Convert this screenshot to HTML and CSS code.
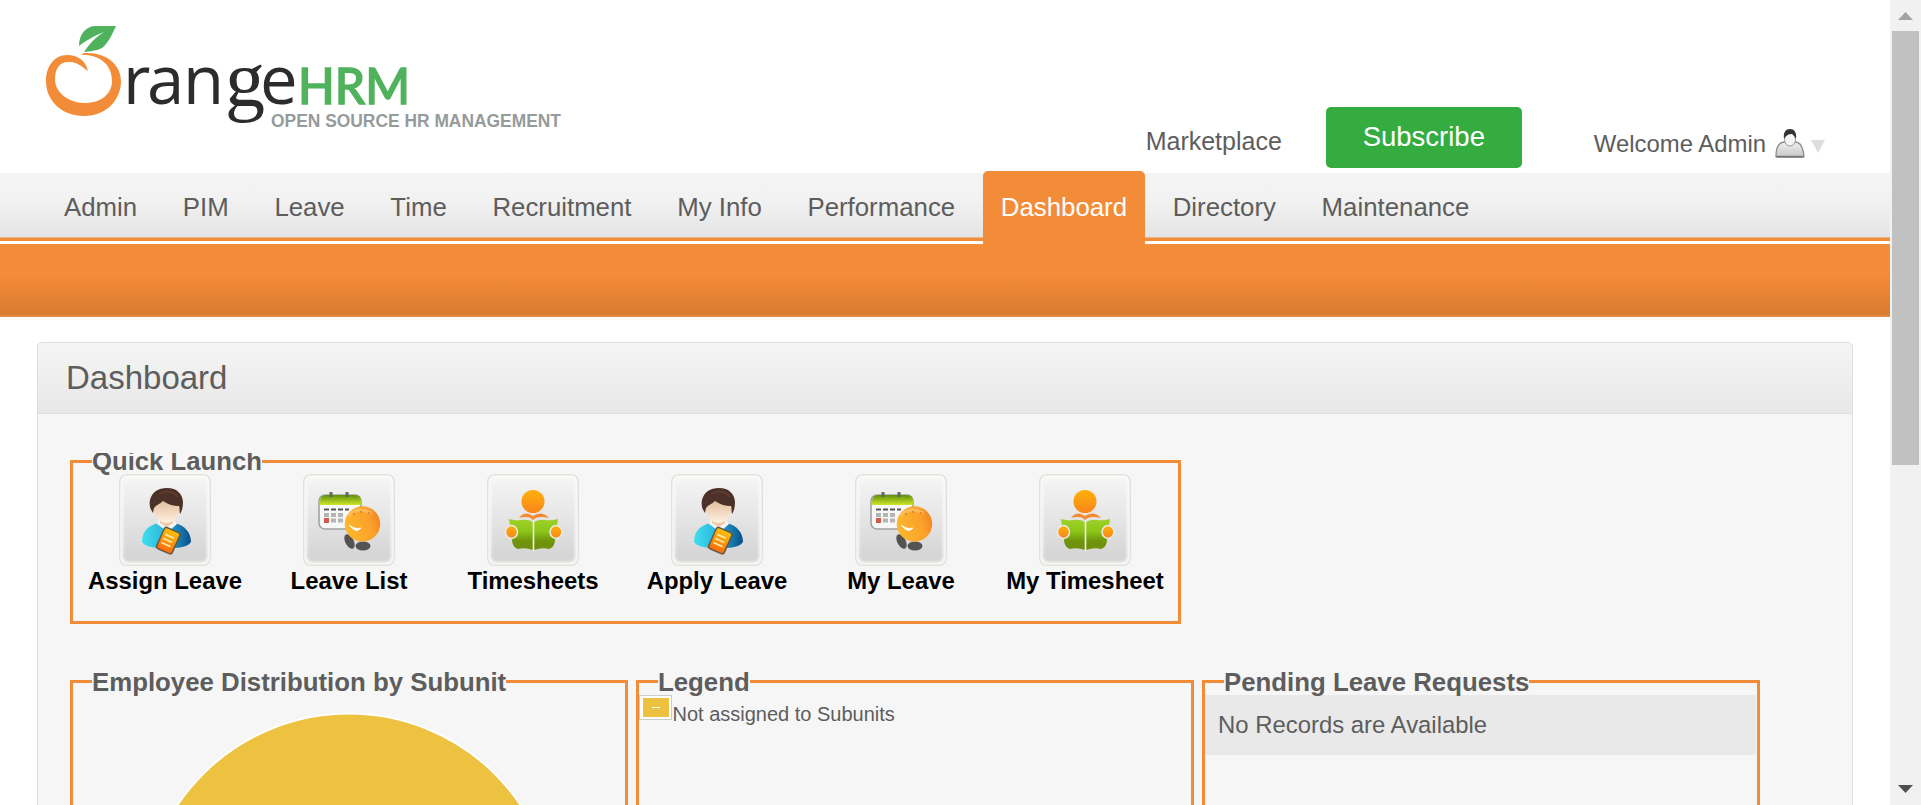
FILE: index.html
```html
<!DOCTYPE html>
<html lang="en">
<head>
<meta charset="utf-8">
<title>OrangeHRM</title>
<link rel="stylesheet" href="styles.css">
</head>
<body>
<svg class="defs" width="0" height="0" aria-hidden="true">
  <defs>
    <linearGradient id="tile" x1="0" y1="0" x2="0" y2="1"><stop offset="0" stop-color="#f5f5f5"/><stop offset="1" stop-color="#d3d3d3"/></linearGradient>
    <linearGradient id="shirt" x1="0" y1="0" x2="1" y2="0"><stop offset="0" stop-color="#3fe0ee"/><stop offset=".45" stop-color="#2cb4dc"/><stop offset="1" stop-color="#0a4f8a"/></linearGradient>
    <linearGradient id="card" x1="0" y1="0" x2="0" y2="1"><stop offset="0" stop-color="#fdc20a"/><stop offset="1" stop-color="#f76a0c"/></linearGradient>
    <linearGradient id="skin" x1="0" y1="0" x2="0" y2="1"><stop offset="0" stop-color="#d9ac84"/><stop offset="1" stop-color="#fff1e2"/></linearGradient>
    <linearGradient id="calgreen" x1="0" y1="0" x2="0" y2="1"><stop offset="0" stop-color="#5d9209"/><stop offset="1" stop-color="#d0e62a"/></linearGradient>
    <linearGradient id="book" x1="0" y1="0" x2="0" y2="1"><stop offset="0" stop-color="#9fd12a"/><stop offset=".4" stop-color="#8cc618"/><stop offset=".7" stop-color="#6f950c"/><stop offset="1" stop-color="#6f900d"/></linearGradient>
    <linearGradient id="head" x1="0" y1="0" x2="0" y2="1"><stop offset="0" stop-color="#ffb00a"/><stop offset="1" stop-color="#f9861c"/></linearGradient>
    <linearGradient id="ball" x1="0" y1=".3" x2="1" y2="0"><stop offset="0" stop-color="#fdb52b"/><stop offset=".6" stop-color="#fba12c"/><stop offset="1" stop-color="#f07c1c"/></linearGradient>
    <linearGradient id="user" x1="0" y1="0" x2="0" y2="1"><stop offset="0" stop-color="#efefef"/><stop offset="1" stop-color="#c9c9c9"/></linearGradient>
    <filter id="soft" x="-10%" y="-10%" width="120%" height="120%"><feGaussianBlur stdDeviation="1.6"/></filter>
    <g id="frame">
      <rect x=".7" y=".7" width="90.6" height="90.6" rx="7" fill="#f9f9f5" stroke="#dfdfdc" stroke-width="1.3"/>
      <rect x="4" y="4" width="84" height="84" rx="5" fill="url(#tile)" filter="url(#soft)"/>
    </g>
    <symbol id="i-person" viewBox="0 0 92 92">
      <use href="#frame"/>
      <path d="M23 68c0-10 6-17 17-19h15c11 2 17 10 17 19-4 6-14 6-24 6s-21 0-25-6z" fill="url(#shirt)"/>
      <path d="M38 50l2-5h14l4 5-9 8z" fill="#f4f5f6"/>
      <path d="M41 42h13v7l-6 4-7-4z" fill="#efc9a4"/>
      <path d="M34 30c0-7 6-11 13-11s14 5 14 11c0 11-6 19-13.500 19S34 41 34 30z" fill="url(#skin)"/>
      <path d="M34 39c-3-4-4-9-3-13 2-8 8-12 17-12 10 0 16 6 16 15 0 4-1 8-3 11-1-3 0-7-1-8-6 0-12-2-16-5-3 3-7 4-9 7z" fill="#4c3128"/>
      <path d="M40 20c6-4 14-3 19 3" fill="none" stroke="#63402f" stroke-width="1.500"/>
      <g transform="rotate(24 49 66)">
        <rect x="41" y="55" width="17" height="23" rx="2.500" fill="url(#card)" stroke="#665a48" stroke-width="1.500"/>
        <path d="M44 62h10M44 66.500h10M44 71h10" stroke="#ffe3a0" stroke-width="1.800"/>
      </g>
    </symbol>
    <symbol id="i-calendar" viewBox="0 0 92 92">
      <use href="#frame"/>
      <rect x="16" y="21" width="42" height="34" rx="6" fill="#f7f7f7" stroke="#a3a3a3" stroke-width="1.600"/>
      <path d="M17 31v-4q0-6 6-6h29q6 0 6 6v4z" fill="url(#calgreen)"/>
      <path d="M28 18v5M44 18v5" stroke="#666" stroke-width="3"/>
      <path d="M21 35.500h5m2 0h5m2 0h5m2 0h4" stroke="#555" stroke-width="1.800"/>
      <path d="M21 41h5m2 0h5m2 0h5M28 46.500h5m2 0h5" stroke="#b5b5b5" stroke-width="4"/>
      <path d="M21 46.500h5" stroke="#cf5b4c" stroke-width="5"/>
      <ellipse cx="46.500" cy="67.500" rx="4.200" ry="7.800" transform="rotate(-28 46.500 67.500)" fill="#555352"/>
      <ellipse cx="60" cy="72" rx="7.500" ry="4.500" fill="#555352"/>
      <circle cx="59.500" cy="50" r="17.700" fill="url(#ball)"/>
      <path d="M45 42q9-10 24-3" fill="none" stroke="#fdc777" stroke-width="3" opacity=".6"/>
      <path d="M50 40h2m5-2h2m6 1h2" stroke="#e9842e" stroke-width="2"/>
      <path d="M46 51q7 5 12 3-5 6-12-3z" fill="#fff" stroke="#fff" stroke-width=".8"/>
    </symbol>
    <symbol id="i-book" viewBox="0 0 92 92">
      <use href="#frame"/>
      <path d="M32 44c5-6 9-5 14-2 5-3 10-4 16 2-7-1-11-2-16 2-4-4-8-3-14-2z" fill="#f58a35"/>
      <circle cx="46" cy="27.500" r="11.500" fill="url(#head)"/>
      <path d="M22 45q7 2 12 1 7-1 12 2v28q-8-3-15-1-6-2-6-10z" fill="url(#book)"/>
      <path d="M71 45q-7 2-12 1-7-1-12 2v28q8-3 15-1 6-2 6-10z" fill="url(#book)"/>
      <path d="M46.500 47v30" stroke="#f2f6e2" stroke-width="1.600"/>
      <ellipse cx="24.500" cy="58" rx="6" ry="6.500" fill="url(#head)" stroke="#ececec" stroke-width="1.500"/>
      <ellipse cx="69" cy="58" rx="6" ry="6.500" fill="url(#head)" stroke="#ececec" stroke-width="1.500"/>
    </symbol>
  </defs>
</svg>

<div class="window">
  <div class="page">
    <header class="top">
      <svg class="logo" width="530" height="121" viewBox="40 20 530 121" role="img" aria-label="OrangeHRM Open Source HR Management">
        <path d="M79 46c0-12 7-20 17-20h20c-3 6-5 12-10 18-4 6-12 7-22 8 6-9 12-15 20-20-10 4-17 8-25 14z" fill="#50b25c"/>
        <path d="M88 71C86 61 78 55 67 55 54 55 46 67 46 81c0 20 16 35 38 35s37-16 37-35c0-16-14-29-37-28l-3 2c19-1 31 10 31 26 0 13-11 22-27 22S55 93 55 79c0-12 6-18 15-17 7 0 11 4 18 9z" fill="#f38c38"/>
        <text class="word" x="123 147 183 225 260" y="104">ran<tspan class="word-serif" dy="2">g</tspan><tspan dy="-2">e</tspan></text>
        <text class="word-hrm" x="298" y="104" textLength="112" lengthAdjust="spacingAndGlyphs">HRM</text>
        <text class="tagline" x="271" y="126.500" textLength="290" lengthAdjust="spacingAndGlyphs">OPEN SOURCE HR MANAGEMENT</text>
      </svg>
      <div class="account">
        <a class="market">Marketplace</a>
        <a class="subscribe">Subscribe</a>
        <a class="welcome">Welcome Admin
          <svg class="user" width="30" height="29" viewBox="0 0 30 29"><path d="M1 27.500c0-9 2-14 8-14.500h11c6 .5 8 5.500 9 14.500z" fill="url(#user)" stroke="#8c8c8c" stroke-width="1.300"/><path d="M1.500 28h27" stroke="#666" stroke-width="1.300"/><ellipse cx="15" cy="10.500" rx="5.500" ry="6.500" fill="#f4f4f4" stroke="#999"/><path d="M9 10C8 3 11 0 15 0s7 3 6 10c-1-2-2-4-4-5-3 0-6 1-8 5z" fill="#333"/></svg>
          <svg class="caret" width="14" height="13" viewBox="0 0 14 13"><path d="M0 0h14L7 13z" fill="#dedede"/></svg>
        </a>
      </div>
    </header>
    <nav class="menu">
      <a>Admin</a><a>PIM</a><a>Leave</a><a>Time</a><a>Recruitment</a><a>My Info</a><a>Performance</a><a class="current">Dashboard</a><a>Directory</a><a>Maintenance</a>
    </nav>
    <div class="submenu"></div>
    <main class="box">
      <h1 class="title">Dashboard</h1>
      <div class="inner">
        <section class="group quick">
          <h2 class="caption clipped"><span>Quick Launch</span></h2>
          <div class="launchers">
            <a class="launch"><svg width="92" height="92"><use href="#i-person"/></svg>Assign Leave</a>
            <a class="launch"><svg width="92" height="92"><use href="#i-calendar"/></svg>Leave List</a>
            <a class="launch"><svg width="92" height="92"><use href="#i-book"/></svg>Timesheets</a>
            <a class="launch"><svg width="92" height="92"><use href="#i-person"/></svg>Apply Leave</a>
            <a class="launch"><svg width="92" height="92"><use href="#i-calendar"/></svg>My Leave</a>
            <a class="launch"><svg width="92" height="92"><use href="#i-book"/></svg>My Timesheet</a>
          </div>
        </section>
        <div class="panels">
          <section class="group">
            <h2 class="caption">Employee Distribution by Subunit</h2>
            <svg class="pie" width="416" height="416" viewBox="0 0 416 416"><circle cx="208" cy="208" r="206.500" fill="#edc240" stroke="#fff" stroke-width="2"/></svg>
          </section>
          <section class="group">
            <h2 class="caption">Legend</h2>
            <div class="key"><span class="swatch"><i></i></span><span class="key-text">Not assigned to Subunits</span></div>
          </section>
          <section class="group">
            <h2 class="caption">Pending Leave Requests</h2>
            <div class="row">No Records are Available</div>
          </section>
        </div>
      </div>
    </main>
  </div>
  <div class="scrollbar">
    <svg width="31" height="31" viewBox="0 0 31 31"><path d="M8 20h15l-7.500-8z" fill="#a3a3a3"/></svg>
    <div class="thumb"></div>
    <svg class="down" width="31" height="31" viewBox="0 0 31 31"><path d="M8 11h15l-7.500 8z" fill="#505050"/></svg>
  </div>
</div>
</body>
</html>
```
FILE: styles.css
```css
* { box-sizing: border-box; }
body { margin: 0; overflow: hidden; background: #fff; color: #5d5d5d; font-family: "Liberation Sans", Arial, sans-serif; }
.defs { position: absolute; }
.window { display: flex; width: 1921px; height: 805px; overflow: hidden; }
.page { width: 1890px; height: 805px; overflow: hidden; }

.top { display: flex; justify-content: space-between; height: 173px; padding: 20px 65px 0 40px; }
.logo { flex: none; }
.word { font: 67px "Open Sans", sans-serif; fill: #2a2c2e; }
.word-serif { font: 80px "Liberation Serif", serif; }
.word-hrm { font: 500 50px Lato, sans-serif; fill: #50b25c; stroke: #50b25c; stroke-width: 1.4px; }
.tagline { font: bold 17.5px "Liberation Sans", sans-serif; fill: #969b9b; }
.account { display: flex; align-items: flex-start; font-size: 23.9px; line-height: 28px; white-space: nowrap; }
.market { margin: 108px 44px 0 0; font-size: 25px; line-height: 27px; }
.subscribe { width: 196px; height: 61px; margin: 87px 72px 0 0; padding-top: 14px; border-radius: 5px; background: #34ac40; color: #fff; font-size: 27.5px; line-height: 31px; text-align: center; }
.welcome { display: flex; margin-top: 110px; }
.user { margin: -1px 0 0 9px; }
.caret { margin: 10px 0 0 6px; }

.menu { display: flex; gap: 9.7px; height: 71px; padding-left: 46px; border-bottom: 3px solid #fff; background: linear-gradient(#f38c38, #f38c38) 0 65px / 100% 3px no-repeat, linear-gradient(#e9b488, #e9b488) 0 64px / 100% 1px no-repeat, linear-gradient(#f4f4f4, #f2f2f2 40%, #e5e5e5) 0 0 / 100% 64px no-repeat; }
.menu a { height: 73px; margin-top: -2px; padding: 21px 18px 0; border-radius: 5px 5px 0 0; font-size: 25.8px; line-height: 30px; white-space: nowrap; }
.menu .current { background: #f38c38; color: #fff; }
.submenu { height: 73px; border-bottom: 2px solid #e28a42; background: linear-gradient(#f38c38, #f38b38 45%, #d87c30); }

.box { width: 1816px; height: 700px; margin: 25px 0 0 37px; border: 1px solid #dedede; border-radius: 5px; background: #f6f6f6; }
.title { height: 71px; margin: 0; padding: 16px 0 0 28px; border-bottom: 1px solid #dedede; border-radius: 5px 5px 0 0; background: linear-gradient(#f5f5f5, #e8e8e8); font-size: 33px; font-weight: normal; line-height: 38px; }
.inner { padding: 46px 0 0 32px; }
.group { height: 560px; border: 3px solid #f38c38; }
.quick { width: 1111px; height: 164px; }
.caption { width: max-content; height: 30px; margin: -16px 0 0 19px; background: #f6f6f6; font-size: 25.8px; font-weight: bold; line-height: 30px; white-space: nowrap; }
.clipped { height: 23px; margin-top: -10px; overflow: hidden; font-size: 25.7px; }
.clipped span { display: block; margin-top: -7px; }
.launchers { display: flex; margin-top: -2px; }
.launch { display: flex; flex-direction: column; align-items: center; gap: 1px; width: 184px; color: #000; font-size: 23.9px; font-weight: bold; line-height: 28px; white-space: nowrap; }
.panels { display: grid; grid-template-columns: repeat(3, 558px); gap: 8px; margin-top: 56px; }
.pie { display: block; margin: 15px auto 0; }
.key { display: flex; }
.swatch { display: flex; width: 33px; height: 25px; margin-top: -2px; padding: 2px 2px 2px 3px; border: 1px solid #ccc; background: #fff; }
.swatch i { flex: 1; background: linear-gradient(#fff, #fff) 9px 9px / 8px 1px no-repeat #edc240; }
.key-text { padding: 5px 0 0 .5px; font-size: 20px; line-height: 24px; }
.row { height: 60px; margin: -2px 1px 0 0; padding: 16px 0 0 13px; background: #e9e9e9; font-size: 23.9px; line-height: 28px; }

.scrollbar { display: flex; flex-direction: column; width: 31px; height: 805px; background: #f1f1f1; }
.thumb { width: 27px; height: 434px; margin-left: 2px; background: #c1c1c1; }
.down { margin-top: auto; }
```
